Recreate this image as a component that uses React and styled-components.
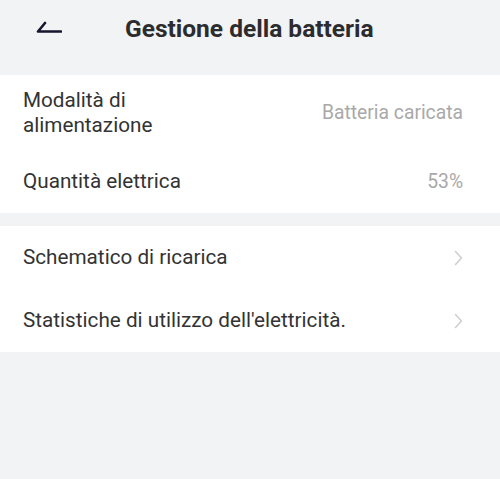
import React from 'react';
import styled, { createGlobalStyle } from 'styled-components';

const GlobalStyle = createGlobalStyle`
  html, body {
    margin: 0;
    padding: 0;
    background: #f2f3f5;
    font-family: Roboto, "Liberation Sans", Arial, sans-serif;
  }
`;

const Page = styled.div`
  width: 500px;
  min-height: 479px;
  background: #f2f3f5;
`;

const Header = styled.header`
  height: 75px;
  box-sizing: border-box;
  padding: 0 0 19px 36px;
  display: flex;
  align-items: center;
`;

const Back = styled.button`
  border: 0;
  background: none;
  padding: 0;
  width: 26px;
  height: 14px;
  display: flex;
  cursor: pointer;
`;

const Title = styled.h1`
  margin: 0 0 0 63px;
  font-size: 24.5px;
  font-weight: 700;
  color: #2c2c2e;
`;

const Card = styled.section`
  background: #fff;
  margin-bottom: ${({ gap }) => gap || '0'};
`;

const Row = styled.div`
  display: flex;
  align-items: center;
  justify-content: space-between;
  min-height: ${({ tall }) => (tall ? '75px' : '63px')};
  padding: 0 37px 0 23px;
  box-sizing: border-box;
  cursor: ${({ link }) => (link ? 'pointer' : 'default')};
`;

const Label = styled.span`
  font-size: 20.7px;
  line-height: 25px;
  color: #333;
  max-width: ${({ narrow }) => (narrow ? '200px' : 'none')};
`;

const Value = styled.span`
  font-size: 19.3px;
  color: #a9a9a9;
`;

const BackArrow = () => (
  <svg width="26" height="14" viewBox="0 0 26 14">
    <path d="M9 2 L2 10.5 H25" fill="none" stroke="#161630" strokeWidth="2.6"
      strokeLinecap="round" strokeLinejoin="round" />
  </svg>
);

const Chevron = () => (
  <svg width="9" height="16" viewBox="0 0 9 16">
    <path d="M1.5 1.5 L7.5 8 L1.5 14.5" fill="none" stroke="#cfcfcf" strokeWidth="1.6"
      strokeLinecap="round" strokeLinejoin="round" />
  </svg>
);

export default function App() {
  return (
    <Page>
      <GlobalStyle />
      <Header>
        <Back aria-label="Indietro"><BackArrow /></Back>
        <Title>Gestione della batteria</Title>
      </Header>

      {/* Battery info */}
      <Card gap="13px">
        <Row tall>
          <Label narrow>Modalità di alimentazione</Label>
          <Value>Batteria caricata</Value>
        </Row>
        <Row>
          <Label>Quantità elettrica</Label>
          <Value>53%</Value>
        </Row>
      </Card>

      {/* Links */}
      <Card>
        <Row link>
          <Label>Schematico di ricarica</Label>
          <Chevron />
        </Row>
        <Row link>
          <Label>Statistiche di utilizzo dell'elettricità.</Label>
          <Chevron />
        </Row>
      </Card>
    </Page>
  );
}
